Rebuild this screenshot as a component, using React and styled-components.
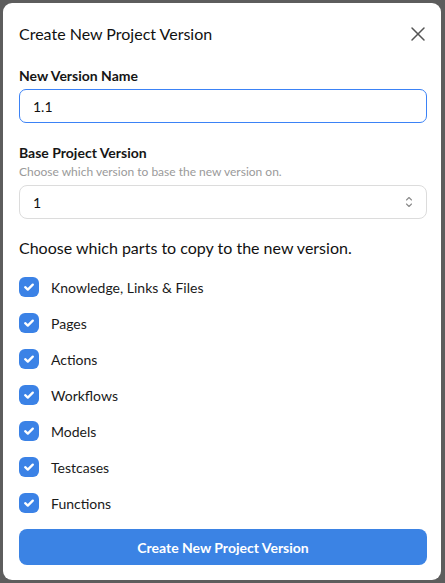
import React, { useState } from 'react';
import styled, { createGlobalStyle } from 'styled-components';
import { X } from 'lucide-react';

const GlobalStyle = createGlobalStyle`
    html, body {
        margin: 0;
        padding: 0;
    }
    body {
        background: #5d5d5d;
        font-family: Lato, "Open Sans", Arial, sans-serif;
        color: #1a1a1a;
    }
    * {
        box-sizing: border-box;
    }
`;

const Backdrop = styled.div`
    height: 583px;
    padding: 3px 4px 3px 3px;
    background: #5d5d5d;
`;

const Modal = styled.div`
    width: 438px;
    height: 577px;
    background: #fff;
    border-radius: 9px;
    padding: 19px 14px 15px 16px;
    display: flex;
    flex-direction: column;
`;

const Header = styled.div`
    display: flex;
    align-items: center;
    justify-content: space-between;
    height: 24px;
`;

const Title = styled.h2`
    margin: 0;
    font-size: 16px;
    font-weight: 400;
    line-height: 24px;
    color: #111;
`;

const CloseButton = styled.button`
    border: none;
    background: none;
    padding: 0;
    margin-right: -3px;
    display: flex;
    color: #555;
    cursor: pointer;
`;

const Label = styled.label`
    display: block;
    font-size: 14px;
    font-weight: 700;
    line-height: 20px;
    color: #161616;
    margin-top: ${(p) => p.$top}px;
`;

const Hint = styled.div`
    font-size: 12px;
    line-height: 16px;
    color: #9a9a9a;
    margin-top: 1px;
`;

const TextInput = styled.input`
    display: block;
    width: 100%;
    height: 34px;
    margin-top: 3px;
    padding: 0 13px;
    border: 1px solid #3b82f6;
    border-radius: 7px;
    font-family: inherit;
    font-size: 14px;
    color: #111;
    outline: none;
`;

const SelectBox = styled.div`
    height: 34px;
    margin-top: 5px;
    border: 1px solid #dcdcdc;
    border-radius: 8px;
    display: flex;
    align-items: center;
    justify-content: space-between;
    padding: 0 12px 0 13px;
    font-size: 14px;
    color: #111;
`;

const Intro = styled.p`
    margin: 17px 0 0;
    font-size: 16px;
    line-height: 24px;
    color: #111;
`;

const List = styled.div`
    margin-top: 9px;
    display: flex;
    flex-direction: column;
`;

const Row = styled.label`
    height: 36px;
    display: flex;
    align-items: center;
    gap: 12px;
    font-size: 14px;
    color: #1a1a1a;
    cursor: pointer;
`;

const Box = styled.span`
    width: 20px;
    height: 20px;
    border-radius: 6px;
    background: ${(p) => (p.$checked ? '#3b82e6' : '#fff')};
    border: ${(p) => (p.$checked ? 'none' : '1px solid #c4c4c4')};
    display: flex;
    align-items: center;
    justify-content: center;
    flex-shrink: 0;
`;

const SubmitButton = styled.button`
    margin-top: 8px;
    height: 36px;
    width: 100%;
    border: none;
    border-radius: 8px;
    background: #3b83e4;
    color: #fff;
    font-family: inherit;
    font-size: 14px;
    font-weight: 700;
    cursor: pointer;
`;

const parts = [
    'Knowledge, Links & Files',
    'Pages',
    'Actions',
    'Workflows',
    'Models',
    'Testcases',
    'Functions',
];

const Check = () => (
    <svg width="12" height="12" viewBox="0 0 12 12" fill="none">
        <path d="M2.2 6.2 L4.8 8.6 L9.8 3.6" stroke="#fff" strokeWidth="2.3" strokeLinecap="round" strokeLinejoin="round" />
    </svg>
);

const UpDown = () => (
    <svg width="10" height="14" viewBox="0 0 10 14" fill="none">
        <path d="M2.5 5 L5 2.5 L7.5 5" stroke="#8a8a8a" strokeWidth="1.1" strokeLinecap="round" strokeLinejoin="round" />
        <path d="M2.5 9 L5 11.5 L7.5 9" stroke="#8a8a8a" strokeWidth="1.1" strokeLinecap="round" strokeLinejoin="round" />
    </svg>
);

function App() {
    const [name, setName] = useState('1.1');
    const [checked, setChecked] = useState(parts.map(() => true));

    function toggle(i) {
        setChecked(checked.map((c, j) => (j === i ? !c : c)));
    }

    return (
        <>
            <GlobalStyle />
            <Backdrop>
                <Modal>
                    <Header>
                        <Title>Create New Project Version</Title>
                        <CloseButton aria-label="Close">
                            <X size={24} strokeWidth={1.5} />
                        </CloseButton>
                    </Header>

                    <Label $top={20}>New Version Name</Label>
                    <TextInput value={name} onChange={(e) => setName(e.target.value)} />

                    <Label $top={20}>Base Project Version</Label>
                    <Hint>Choose which version to base the new version on.</Hint>
                    <SelectBox>
                        <span>1</span>
                        <UpDown />
                    </SelectBox>

                    <Intro>Choose which parts to copy to the new version.</Intro>
                    <List>
                        {parts.map((part, i) => (
                            <Row key={part} onClick={() => toggle(i)}>
                                <Box $checked={checked[i]}>{checked[i] && <Check />}</Box>
                                {part}
                            </Row>
                        ))}
                    </List>

                    <SubmitButton>Create New Project Version</SubmitButton>
                </Modal>
            </Backdrop>
        </>
    );
}

export default App;
